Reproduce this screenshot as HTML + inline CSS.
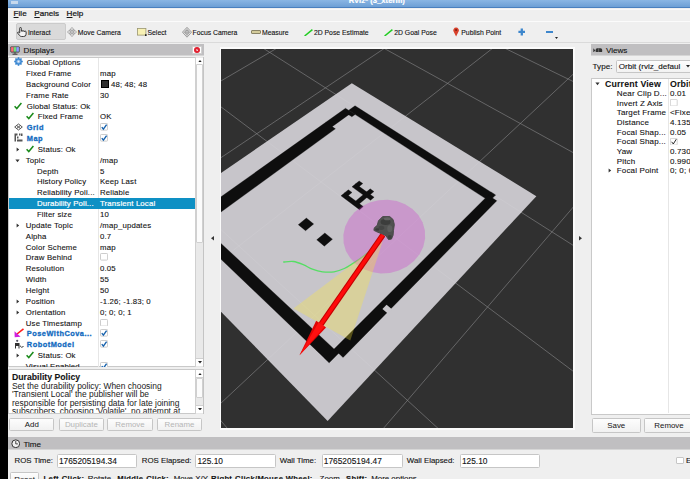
<!DOCTYPE html>
<html><head><meta charset="utf-8">
<style>
*{margin:0;padding:0;box-sizing:border-box}
html,body{width:690px;height:479px;overflow:hidden;background:#efefef;font-family:"Liberation Sans",sans-serif;color:#1e1e1e;position:relative}
.a{position:absolute}
.t{position:absolute;white-space:pre;line-height:1;color:#141414;-webkit-text-stroke:0.12px #141414}
.tb{font-size:6.85px;top:29.6px}
.dockh{background:#c0bfc1;height:12px;border-bottom:1px solid #d6d6d6}
.dockt{font-size:8.1px;top:3.4px}
.tree{background:#fff}
.lab{position:absolute;font-size:7.8px;letter-spacing:0.15px;white-space:pre;line-height:1;color:#111;-webkit-text-stroke:0.1px #111}
.b{font-weight:bold;color:#136bbf;-webkit-text-stroke:0.3px #136bbf;font-size:7.4px;letter-spacing:0.5px}
.btn{position:absolute;border:1px solid #c6c6c6;border-radius:1.5px;background:linear-gradient(#fdfdfd,#f1f1f1);font-size:7.9px;text-align:center;line-height:1;color:#141414}
.dis{color:#b5b5b5}
.field{position:absolute;border:1px solid #c6c6c6;border-radius:1.5px;background:#fff}
.sb{position:absolute;background:#fff;border:1px solid #cfcfcf}
</style></head><body>
<div class="a" style="left:0;top:0;width:8px;height:479px;background:#000"></div>
<!-- title bar -->
<div class="a" style="left:8px;top:0;width:682px;height:7.5px;background:linear-gradient(#8ab6e4,#6d9fd5);border-bottom:1px solid #4a80bf;overflow:hidden"><div class="t" style="left:340.7px;top:-3.3px;font-size:7.7px;font-weight:bold;color:#fff;-webkit-text-stroke:0.2px #fff">RViz* (3_xterm)</div></div>
<div class="a" style="left:11px;top:1px;width:6.5px;height:2.6px;background:#d8e4f0;opacity:0.8"></div>
<!-- menu -->
<div class="a" style="left:8px;top:8.5px;width:682px;height:12.5px;background:#efefef;border-top:1px solid #f9f9f9"></div>
<div class="t" style="left:13.6px;top:9.6px;font-size:8.1px;-webkit-text-stroke:0.22px #141414"><u>F</u>ile</div>
<div class="t" style="left:34.3px;top:9.6px;font-size:8.1px;-webkit-text-stroke:0.22px #141414"><u>P</u>anels</div>
<div class="t" style="left:66.6px;top:9.6px;font-size:8.1px;-webkit-text-stroke:0.22px #141414"><u>H</u>elp</div>
<!-- toolbar -->
<div class="a" style="left:8px;top:21px;width:682px;height:21.5px;background:#efefef;border-top:1px solid #fbfbfb;border-bottom:1px solid #dadada"></div>
<div class="a" style="left:15.7px;top:23.2px;width:50px;height:17.3px;background:#dadada;border:1px solid #cbcbcb;border-radius:2px"></div>
<svg class="a" style="left:17px;top:27px" width="10" height="10" viewBox="0 0 10 10"><path d="M2.7 5.6V1.3Q2.7 0.4 3.5 0.4Q4.3 0.4 4.3 1.3V4.3Q4.3 3.6 5.1 3.6Q5.9 3.6 5.9 4.4Q5.9 3.8 6.7 3.8Q7.5 3.8 7.5 4.6Q7.5 4.1 8.3 4.1Q9.1 4.1 9.1 5V7.2Q9.1 9.5 6.6 9.5H4.6Q3.3 9.5 2.4 8.3L0.7 6.1Q0.3 5.3 1.1 5.1Q1.9 5 2.7 6Z" stroke="#1a1a1a" stroke-width="0.85" fill="#f4f4f4"/></svg>
<div class="t tb" style="left:27.9px">Interact</div>
<svg class="a" style="left:67.3px;top:27px" width="10" height="10" viewBox="0 0 10 10"><path d="M5 0.4L6.9 2.6H5.8V4.2H7.4V3.1L9.6 5L7.4 6.9V5.8H5.8V7.4H6.9L5 9.6L3.1 7.4H4.2V5.8H2.6V6.9L0.4 5L2.6 3.1V4.2H4.2V2.6H3.1Z" stroke="#8c8c8c" stroke-width="0.7" fill="#f0f0f0"/><circle cx="5" cy="5" r="1.3" fill="none" stroke="#8c8c8c" stroke-width="0.55"/></svg>
<div class="t tb" style="left:77.8px">Move Camera</div>
<svg class="a" style="left:136.6px;top:27.8px" width="10" height="8" viewBox="0 0 10 8"><rect x="0.5" y="0.5" width="8.4" height="6.6" fill="#f8f1b4" stroke="#9a9670" stroke-width="0.8"/><rect x="8" y="6.3" width="1.6" height="1.6" fill="#111"/></svg>
<div class="t tb" style="left:147.5px">Select</div>
<svg class="a" style="left:181.7px;top:27px" width="10" height="10.5" viewBox="0 0 10 10.5"><path d="M5 0.3L9.6 5.2L5 10.2L0.4 5.2Z" stroke="#8a8a8a" stroke-width="0.8" fill="#e6e6e6"/><circle cx="5" cy="5.2" r="2" stroke="#8a8a8a" stroke-width="0.8" fill="none"/><path d="M5 1.5V9 M1.5 5.2H8.5" stroke="#8a8a8a" stroke-width="0.6"/></svg>
<div class="t tb" style="left:192.5px">Focus Camera</div>
<div class="a" style="left:251.4px;top:30px;width:9.4px;height:3.6px;background:#d4cc9c;border:0.8px solid #8a8466;border-radius:1px"></div>
<div class="t tb" style="left:262px">Measure</div>
<svg class="a" style="left:303.5px;top:28.5px" width="9" height="7.5" viewBox="0 0 9 7.5"><path d="M0.6 7L8.4 0.6" stroke="#22cc22" stroke-width="1.5"/></svg>
<div class="t tb" style="left:313.9px">2D Pose Estimate</div>
<svg class="a" style="left:383.6px;top:28.5px" width="9" height="7.5" viewBox="0 0 9 7.5"><path d="M0.6 7L8.4 0.6" stroke="#22cc22" stroke-width="1.5"/></svg>
<div class="t tb" style="left:394.2px">2D Goal Pose</div>
<svg class="a" style="left:452.6px;top:27.2px" width="6.2" height="9.8" viewBox="0 0 6.2 9.8"><path d="M3.1 9.6L0.6 4.6A2.8 2.8 0 1 1 5.6 4.6Z" fill="#d8402a"/><circle cx="3.1" cy="3" r="1" fill="#7a1a10"/></svg>
<div class="t tb" style="left:461.3px">Publish Point</div>
<svg class="a" style="left:517.6px;top:27.9px" width="7.6" height="7.8" viewBox="0 0 7.6 7.8"><path d="M3.8 0.4V7.4 M0.4 3.9H7.2" stroke="#3d86cc" stroke-width="2.3"/></svg>
<div class="a" style="left:545.5px;top:31px;width:7.7px;height:2.3px;background:#3d86cc"></div>
<svg class="a" style="left:555px;top:36.8px" width="3" height="2" viewBox="0 0 3 2"><path d="M0 0H3L1.5 2Z" fill="#222"/></svg>

<!-- Displays dock -->
<div class="a dockh" style="left:8px;top:44.2px;width:195.5px"></div>
<svg class="a" style="left:10.2px;top:46px" width="10" height="8.6" viewBox="0 0 10 8.6"><rect x="0.4" y="0.4" width="9.2" height="6" rx="0.8" fill="#333"/><rect x="1.1" y="1.1" width="2.6" height="4.6" fill="#ff6b7a"/><rect x="3.7" y="1.1" width="2.6" height="4.6" fill="#6ee07a"/><rect x="6.3" y="1.1" width="2.6" height="4.6" fill="#8fa0ff"/><path d="M5 6.4V7.8 M2.5 8.2H7.5" stroke="#222" stroke-width="0.9"/></svg>
<div class="t dockt" style="left:23.6px;top:47.1px">Displays</div>
<div class="a" style="left:192.4px;top:45.5px;width:9.7px;height:8.4px;background:#fff;border:0.6px solid #d0d0d0;border-radius:1px"></div>
<div class="a" style="left:194.4px;top:46.9px;width:5.8px;height:5.8px;border-radius:50%;background:#e02030"></div>
<svg class="a" style="left:196.1px;top:48.6px" width="2.4" height="2.4" viewBox="0 0 2.4 2.4"><path d="M0.3 0.3L2.1 2.1M2.1 0.3L0.3 2.1" stroke="#fff" stroke-width="0.7"/></svg>
<div class="a tree" style="left:8.2px;top:56.9px;width:195.6px;height:310.6px;border:1px solid #c9c9c9"></div>
<div class="a" style="left:98.2px;top:57.5px;width:0.7px;height:309.5px;background:#e6e6e6"></div>
<div class="a" style="left:0;top:57px;width:203px;height:310px;overflow:hidden"><div class="a" style="left:0;top:-57px;width:203px;height:400px"><!--TREE--><div class="lab" style="left:26.75px;top:59.10px;">Global Options</div><svg class="a" style="left:13.8px;top:56.50px" width="9" height="9" viewBox="0 0 9 9"><g fill="#3a86d0"><circle cx="4.5" cy="4.5" r="3.3"/><rect x="3.7" y="0.2" width="1.6" height="8.6"/><rect x="0.2" y="3.7" width="8.6" height="1.6"/><rect x="3.7" y="0.2" width="1.6" height="8.6" transform="rotate(45 4.5 4.5)"/><rect x="3.7" y="0.2" width="1.6" height="8.6" transform="rotate(-45 4.5 4.5)"/></g><circle cx="4.5" cy="4.5" r="2.1" fill="#7fb2e6"/><circle cx="4.5" cy="4.5" r="1.0" fill="#e8f1fb"/></svg><div class="lab" style="left:26.1px;top:69.95px;">Fixed Frame</div><div class="lab" style="left:100.0px;top:69.95px;">map</div><div class="lab" style="left:26.1px;top:80.80px;">Background Color</div><div class="a" style="left:101px;top:80.30px;width:7.7px;height:7.7px;background:#303030;border:1px solid #000"></div><div class="lab" style="left:111px;top:80.80px">48; 48; 48</div><div class="lab" style="left:26.1px;top:91.65px;">Frame Rate</div><div class="lab" style="left:100.0px;top:91.65px;">30</div><div class="lab" style="left:26.75px;top:102.50px;">Global Status: Ok</div><svg class="a" style="left:14.0px;top:101.50px" width="8" height="8" viewBox="0 0 8 8"><path d="M0.6 4.2 L2.8 6.6 L7.4 1.0" stroke="#1a8a1a" stroke-width="1.5" fill="none"/></svg><div class="lab" style="left:37.75px;top:113.35px;">Fixed Frame</div><svg class="a" style="left:25.5px;top:112.35px" width="8" height="8" viewBox="0 0 8 8"><path d="M0.6 4.2 L2.8 6.6 L7.4 1.0" stroke="#1a8a1a" stroke-width="1.5" fill="none"/></svg><div class="lab" style="left:100.0px;top:113.35px;">OK</div><div class="lab b" style="left:26.75px;top:124.20px;">Grid</div><svg class="a" style="left:14px;top:123.40px" width="9" height="8" viewBox="0 0 9 8"><path d="M4.5 1 L8.3 4 L4.5 7 L0.7 4 Z M2.6 2.5 L6.4 5.5 M6.4 2.5 L2.6 5.5" stroke="#555" stroke-width="1" fill="none"/></svg><svg class="a" style="left:99.7px;top:123.20px" width="8.1" height="7.6" viewBox="0 0 8.1 7.6"><rect x="0.5" y="0.5" width="7.1" height="6.6" rx="0.8" fill="#fff" stroke="#c6c6c6" stroke-width="0.9"/><path d="M1.8 4.1 L3.4 6.2 L6.6 1.7" stroke="#1762ad" stroke-width="1.4" fill="none"/></svg><div class="lab b" style="left:26.75px;top:135.05px;">Map</div><svg class="a" style="left:14px;top:133.45px" width="9" height="9" viewBox="0 0 9 9"><path d="M0.5 0.5h3v2h-1.5v6h-1.5z M5 0.5h1.5v2H5z M7 0.5h1.5v2.5H7z M3 6.5h5.5v2H3z M3 3.5h1.5v2H3z" fill="#555"/></svg><svg class="a" style="left:99.7px;top:134.05px" width="8.1" height="7.6" viewBox="0 0 8.1 7.6"><rect x="0.5" y="0.5" width="7.1" height="6.6" rx="0.8" fill="#fff" stroke="#c6c6c6" stroke-width="0.9"/><path d="M1.8 4.1 L3.4 6.2 L6.6 1.7" stroke="#1762ad" stroke-width="1.4" fill="none"/></svg><div class="lab" style="left:37.75px;top:145.90px;">Status: Ok</div><svg class="a" style="left:25.5px;top:144.90px" width="8" height="8" viewBox="0 0 8 8"><path d="M0.6 4.2 L2.8 6.6 L7.4 1.0" stroke="#1a8a1a" stroke-width="1.5" fill="none"/></svg><svg class="a" style="left:15.8px;top:147.00px" width="4" height="5" viewBox="0 0 4 5"><path d="M0.6 0.4 L3.2 2.5 L0.6 4.6Z" fill="#333"/></svg><div class="lab" style="left:25.8px;top:156.75px;">Topic</div><svg class="a" style="left:15.2px;top:158.65px" width="5" height="4" viewBox="0 0 5 4"><path d="M0.4 0.6 L4.6 0.6 L2.5 3.2Z" fill="#333"/></svg><div class="lab" style="left:100.0px;top:156.75px;">/map</div><div class="lab" style="left:36.9px;top:167.60px;">Depth</div><div class="lab" style="left:100.0px;top:167.60px;">5</div><div class="lab" style="left:36.9px;top:178.45px;">History Policy</div><div class="lab" style="left:100.0px;top:178.45px;">Keep Last</div><div class="lab" style="left:36.9px;top:189.30px;">Reliability Poli...</div><div class="lab" style="left:100.0px;top:189.30px;">Reliable</div><div class="a" style="left:8.7px;top:197.85px;width:186.3px;height:10.85px;background:#0e90c4"></div><div class="lab" style="left:36.9px;top:200.15px;color:#fff;-webkit-text-stroke:0.2px #fff;">Durability Poli...</div><div class="lab" style="left:100.0px;top:200.15px;color:#fff;-webkit-text-stroke:0.2px #fff;">Transient Local</div><div class="lab" style="left:36.9px;top:211.00px;">Filter size</div><div class="lab" style="left:100.0px;top:211.00px;">10</div><div class="lab" style="left:25.8px;top:221.85px;">Update Topic</div><svg class="a" style="left:15.8px;top:222.95px" width="4" height="5" viewBox="0 0 4 5"><path d="M0.6 0.4 L3.2 2.5 L0.6 4.6Z" fill="#333"/></svg><div class="lab" style="left:100.0px;top:221.85px;">/map_updates</div><div class="lab" style="left:25.8px;top:232.70px;">Alpha</div><div class="lab" style="left:100.0px;top:232.70px;">0.7</div><div class="lab" style="left:25.8px;top:243.55px;">Color Scheme</div><div class="lab" style="left:100.0px;top:243.55px;">map</div><div class="lab" style="left:25.8px;top:254.40px;">Draw Behind</div><svg class="a" style="left:99.7px;top:253.40px" width="8.1" height="7.6" viewBox="0 0 8.1 7.6"><rect x="0.5" y="0.5" width="7.1" height="6.6" rx="0.8" fill="#fff" stroke="#c6c6c6" stroke-width="0.9"/></svg><div class="lab" style="left:25.8px;top:265.25px;">Resolution</div><div class="lab" style="left:100.0px;top:265.25px;">0.05</div><div class="lab" style="left:25.8px;top:276.10px;">Width</div><div class="lab" style="left:100.0px;top:276.10px;">55</div><div class="lab" style="left:25.8px;top:286.95px;">Height</div><div class="lab" style="left:100.0px;top:286.95px;">50</div><div class="lab" style="left:25.8px;top:297.80px;">Position</div><svg class="a" style="left:15.8px;top:298.90px" width="4" height="5" viewBox="0 0 4 5"><path d="M0.6 0.4 L3.2 2.5 L0.6 4.6Z" fill="#333"/></svg><div class="lab" style="left:100.0px;top:297.80px;">-1.26; -1.83; 0</div><div class="lab" style="left:25.8px;top:308.65px;">Orientation</div><svg class="a" style="left:15.8px;top:309.75px" width="4" height="5" viewBox="0 0 4 5"><path d="M0.6 0.4 L3.2 2.5 L0.6 4.6Z" fill="#333"/></svg><div class="lab" style="left:100.0px;top:308.65px;">0; 0; 0; 1</div><div class="lab" style="left:25.8px;top:319.50px;">Use Timestamp</div><svg class="a" style="left:99.7px;top:318.50px" width="8.1" height="7.6" viewBox="0 0 8.1 7.6"><rect x="0.5" y="0.5" width="7.1" height="6.6" rx="0.8" fill="#fff" stroke="#c6c6c6" stroke-width="0.9"/></svg><div class="lab b" style="left:26.8px;top:330.35px;">PoseWithCova...</div><svg class="a" style="left:13.5px;top:328.05px" width="10" height="10" viewBox="0 0 10 10"><path d="M9.5 0.8 L3 6" stroke="#ff1a1a" stroke-width="1.6"/><path d="M0.5 3.2 L0.7 9.3 L6.6 8.8 Z" fill="#d020e0"/></svg><svg class="a" style="left:99.7px;top:329.35px" width="8.1" height="7.6" viewBox="0 0 8.1 7.6"><rect x="0.5" y="0.5" width="7.1" height="6.6" rx="0.8" fill="#fff" stroke="#c6c6c6" stroke-width="0.9"/><path d="M1.8 4.1 L3.4 6.2 L6.6 1.7" stroke="#1762ad" stroke-width="1.4" fill="none"/></svg><div class="lab b" style="left:26.8px;top:341.20px;">RobotModel</div><svg class="a" style="left:13.5px;top:338.90px" width="10" height="10" viewBox="0 0 10 10"><circle cx="3.2" cy="1.8" r="1.1" fill="#556"/><path d="M1 4h4.5v5.5h-1v-2.5h-2.5v2.5h-1z" fill="#333"/><path d="M5.8 6.5 Q7.5 9.5 9.5 7.5" stroke="#333" stroke-width="1" fill="none"/></svg><svg class="a" style="left:99.7px;top:340.20px" width="8.1" height="7.6" viewBox="0 0 8.1 7.6"><rect x="0.5" y="0.5" width="7.1" height="6.6" rx="0.8" fill="#fff" stroke="#c6c6c6" stroke-width="0.9"/><path d="M1.8 4.1 L3.4 6.2 L6.6 1.7" stroke="#1762ad" stroke-width="1.4" fill="none"/></svg><div class="lab" style="left:37.75px;top:352.05px;">Status: Ok</div><svg class="a" style="left:25.5px;top:351.05px" width="8" height="8" viewBox="0 0 8 8"><path d="M0.6 4.2 L2.8 6.6 L7.4 1.0" stroke="#1a8a1a" stroke-width="1.5" fill="none"/></svg><svg class="a" style="left:15.8px;top:353.15px" width="4" height="5" viewBox="0 0 4 5"><path d="M0.6 0.4 L3.2 2.5 L0.6 4.6Z" fill="#333"/></svg><div class="lab" style="left:25.8px;top:362.90px;">Visual Enabled</div><svg class="a" style="left:99.7px;top:361.90px" width="8.1" height="7.6" viewBox="0 0 8.1 7.6"><rect x="0.5" y="0.5" width="7.1" height="6.6" rx="0.8" fill="#fff" stroke="#c6c6c6" stroke-width="0.9"/><path d="M1.8 4.1 L3.4 6.2 L6.6 1.7" stroke="#1762ad" stroke-width="1.4" fill="none"/></svg><!--/TREE--></div></div>
<!-- tree scrollbar -->
<div class="a" style="left:195.2px;top:57.3px;width:8.8px;height:309.8px;background:#e9e9e9;border-left:1px solid #d0d0d0;border-right:1px solid #c4c4c4"></div>
<div class="a" style="left:195.9px;top:64.3px;width:7.4px;height:178.5px;background:#fbfbfb;border:0.7px solid #d0d0d0;border-radius:1px"></div>
<div class="a" style="left:195.9px;top:57.6px;width:7.4px;height:6.8px;background:#fff"></div>
<svg class="a" style="left:197.5px;top:59.6px" width="4" height="2.5" viewBox="0 0 4 2.5"><path d="M0 2.5H4L2 0Z" fill="#222"/></svg>
<div class="a" style="left:195.9px;top:358.2px;width:7.4px;height:8.3px;background:#fff;border-top:0.7px solid #d0d0d0"></div>
<svg class="a" style="left:197.5px;top:361px" width="4" height="2.5" viewBox="0 0 4 2.5"><path d="M0 0H4L2 2.5Z" fill="#222"/></svg>
<!-- description -->
<div class="a tree" style="left:8.2px;top:369.2px;width:195.6px;height:44.6px;border:1px solid #c9c9c9;overflow:hidden">
 <div class="t" style="left:2.8px;top:2.7px;font-size:8.7px;font-weight:bold;-webkit-text-stroke:0.1px #141414">Durability Policy</div>
 <div class="t" style="left:2.8px;top:11.6px;font-size:8.45px;line-height:8.4px;-webkit-text-stroke:0;color:#222">Set the durability policy: When choosing
'Transient Local' the publisher will be
responsible for persisting data for late joining
subscribers, choosing 'Volatile', no attempt at</div>
</div>
<div class="a" style="left:195.2px;top:370px;width:8.8px;height:43.6px;background:#e9e9e9;border-left:1px solid #d0d0d0;border-right:1px solid #c4c4c4"></div>
<div class="a" style="left:195.9px;top:370.3px;width:7.4px;height:7.6px;background:#fff;border-bottom:0.7px solid #d0d0d0"></div>
<svg class="a" style="left:197.5px;top:372.8px" width="4" height="2.5" viewBox="0 0 4 2.5"><path d="M0 2.5H4L2 0Z" fill="#222"/></svg>
<div class="a" style="left:195.9px;top:377.9px;width:7.4px;height:20px;background:#fbfbfb;border:0.7px solid #d0d0d0;border-radius:1px"></div>
<div class="a" style="left:195.9px;top:404.8px;width:7.4px;height:8.3px;background:#fff;border-top:0.7px solid #d0d0d0"></div>
<svg class="a" style="left:197.5px;top:407.6px" width="4" height="2.5" viewBox="0 0 4 2.5"><path d="M0 0H4L2 2.5Z" fill="#222"/></svg>
<!-- buttons -->
<div class="btn" style="left:9.3px;top:417.5px;width:45.2px;height:13.8px;padding-top:2.3px">Add</div>
<div class="btn dis" style="left:58.7px;top:417.5px;width:45.3px;height:13.8px;padding-top:2.3px">Duplicate</div>
<div class="btn dis" style="left:107.3px;top:417.5px;width:45.4px;height:13.8px;padding-top:2.3px">Remove</div>
<div class="btn dis" style="left:156.7px;top:417.5px;width:45.6px;height:13.8px;padding-top:2.3px">Rename</div>
<!-- splitter arrows -->
<svg class="a" style="left:210.5px;top:236.3px" width="3" height="4.6" viewBox="0 0 3 4.6"><path d="M3 0V4.6L0 2.3Z" fill="#333"/></svg>
<svg class="a" style="left:579.3px;top:236.3px" width="3" height="4.6" viewBox="0 0 3 4.6"><path d="M0 0V4.6L3 2.3Z" fill="#333"/></svg>

<!-- 3D view -->
<div class="a" style="left:220.2px;top:47.4px;width:354.4px;height:382.4px;background:#fbfbfb"></div>
<div class="a" style="left:221.3px;top:48.7px;width:352px;height:379.8px;background:#303030;overflow:hidden" id="v3d"><!--SCENE--><svg width="352" height="380" style="position:absolute;left:0;top:0"><path d="M-643.49,226.82L194.31,6244.77M-496.66,157.83L551.81,2942.24M-374.95,100.65L674.54,1808.55M-272.43,52.49L736.59,1235.34M-184.90,11.37L774.04,889.35M-109.28,-24.16L799.10,657.82M-43.31,-55.15L817.05,492.02M14.76,-82.43L830.54,367.43M66.26,-106.63L841.04,270.39M112.24,-128.23L849.46,192.67M153.56,-147.64L856.35,129.03M-566.47,190.63L153.56,-147.64M-548.98,258.47L197.08,-130.51M-527.69,341.07L245.03,-111.63M-501.20,443.81L298.12,-90.73M-467.35,575.09L357.23,-67.46M-422.59,748.73L423.44,-41.39M-360.60,989.16L498.12,-12.00M-269.10,1344.11L583.00,21.42M-120.38,1920.95L680.32,59.73M163.58,3022.39L793.03,104.10" stroke="#8a8a8c" stroke-width="0.8" fill="none" opacity="0.75"/><polygon points="130.82,34.27 -81.11,179.49 106.63,372.06 315.37,147.14" fill="rgb(211,209,214)" fill-opacity="0.93"/><path d="M134.03,56.78L127.67,61.34L268.43,152.11L274.50,145.98ZM270.23,143.27L267.20,146.29L271.48,149.03L274.50,145.98ZM267.20,146.29L113.08,300.00L122.09,308.41L275.79,151.79ZM113.08,300.00L103.70,309.36L108.18,313.64L117.56,304.19ZM-18.87,176.76L-28.08,183.46L108.18,313.64L117.56,304.19ZM124.49,59.29L104.77,73.31L111.15,77.63L130.87,63.40ZM130.87,63.40L127.65,65.72L130.87,67.82L134.09,65.48ZM104.77,73.31L-37.50,174.47L-28.08,183.46L114.39,79.82ZM85.39,169.10L77.28,175.66L84.56,181.66L92.68,174.98ZM103.84,184.00L95.73,190.86L103.35,197.13L111.46,190.15ZM123.67,143.76L119.97,146.78L138.54,160.71L142.24,157.55ZM127.35,140.76L123.67,143.76L127.33,146.47L131.00,143.45ZM134.60,134.85L130.99,137.79L149.54,151.33L153.14,148.26ZM138.17,131.93L134.60,134.85L138.24,137.49L141.82,134.55ZM149.20,139.84L134.72,151.97L138.47,154.75L152.93,142.52Z" fill="#0e0e0e" stroke="#0e0e0e" stroke-width="0.3"/><polygon points="165.55,255.82 161.42,259.98 166.82,264.51 170.94,260.30" fill="rgb(200,198,202)"/><path d="M62.70,213.00C64.33,212.92 69.17,212.02 72.50,212.50C75.83,212.98 79.55,214.62 82.70,215.90C85.85,217.18 88.27,219.05 91.40,220.20C94.53,221.35 97.88,222.37 101.50,222.80C105.12,223.23 109.47,223.35 113.10,222.80C116.73,222.25 120.15,220.90 123.30,219.50C126.45,218.10 129.10,216.22 132.00,214.40C134.90,212.58 137.58,210.95 140.70,208.60C143.82,206.25 147.70,203.18 150.70,200.30C153.70,197.42 157.37,192.80 158.70,191.30" stroke="rgb(85,222,100)" stroke-width="1.3" fill="none" stroke-linecap="round"/><polygon points="122.64,193.95 122.40,185.70 124.20,177.54 127.95,169.89 133.48,163.13 140.50,157.59 148.66,153.56 157.56,151.23 166.73,150.73 175.74,152.07 184.12,155.20 191.45,159.95 197.36,166.09 201.57,173.30 203.86,181.23 204.10,189.48 202.30,197.64 198.55,205.29 193.02,212.05 186.00,217.59 177.84,221.62 168.94,223.95 159.77,224.45 150.76,223.11 142.38,219.98 135.05,215.23 129.14,209.09 124.93,201.88" fill="rgb(204,51,204)" fill-opacity="0.3"/><polygon points="161.70,192.30 72.50,259.50 129.30,291.60" fill="rgb(255,235,50)" fill-opacity="0.3"/><polygon points="102.40,276.65 164.28,187.41 159.68,184.22 97.80,273.46" fill="#c40000"/><polygon points="101.52,276.04 163.41,186.80 160.55,184.82 98.67,274.07" fill="#ff0a0a"/><polygon points="105.03,278.47 78.50,306.20 95.17,271.64" fill="#e00404"/><polygon points="103.79,277.62 78.50,306.20 97.63,273.35" fill="#ff1010"/><polygon points="157.48,171.75 161.65,167.57 168.75,167.57 172.09,170.50 173.35,175.51 172.51,181.35 172.09,186.36 170.42,190.12 167.50,190.54 164.99,186.78 161.65,185.11 156.23,183.02 152.89,181.35 153.30,178.85 156.23,176.34" fill="#505150" stroke="#454645" stroke-width="0.9" stroke-linejoin="round"/><ellipse cx="164.58" cy="173.00" rx="5.01" ry="2.92" fill="#3c3d3c"/><ellipse cx="168.75" cy="179.68" rx="2.51" ry="3.34" fill="#5e5f5e"/><ellipse cx="160.40" cy="178.85" rx="2.92" ry="2.09" fill="#444544"/><ellipse cx="156.23" cy="180.52" rx="2.09" ry="1.25" fill="#3a3b3a"/><ellipse cx="168.75" cy="188.03" rx="2.09" ry="2.09" fill="#3e3f3e"/><ellipse cx="166.25" cy="169.66" rx="3.34" ry="1.50" fill="#626362"/></svg><!--/SCENE--></div>

<!-- Views dock -->
<div class="a dockh" style="left:591.2px;top:43.9px;width:99px"></div>
<svg class="a" style="left:593.2px;top:47.6px" width="9.4" height="4.8" viewBox="0 0 9.4 4.8"><path d="M0.3 0.3L2.3 2.4L0.3 4.5Z" fill="#333"/><rect x="2.6" y="0.3" width="6.6" height="4.2" rx="1.6" fill="#333"/><path d="M5.6 0.5V4.3" stroke="#999" stroke-width="0.5"/></svg>
<div class="t dockt" style="left:605.9px;top:47px">Views</div>
<div class="t" style="left:592.6px;top:63.2px;font-size:8.1px">Type:</div>
<div class="a" style="left:616.2px;top:59.6px;width:80px;height:13.7px;background:linear-gradient(#fdfdfd,#f2f2f2);border:1px solid #c6c6c6;border-radius:1.5px"></div>
<div class="t" style="left:618.8px;top:63.2px;font-size:8.1px">Orbit (rviz_defaul</div>
<svg class="a" style="left:686.3px;top:65.2px" width="4" height="2.5" viewBox="0 0 4 2.5"><path d="M0 0H4L2 2.5Z" fill="#222"/></svg>
<div class="a tree" style="left:591.2px;top:78.4px;width:100px;height:336.4px;border:1px solid #c9c9c9"></div>
<div class="a" style="left:667.7px;top:79px;width:0.7px;height:334px;background:#e6e6e6"></div>
<!--VIEWS--><div class="lab" style="left:605px;top:79.55px;font-weight:bold;font-size:8.8px;-webkit-text-stroke:0.05px #141414;">Current View</div><svg class="a" style="left:595.2px;top:81.70px" width="5" height="4" viewBox="0 0 5 4"><path d="M0.4 0.6 L4.6 0.6 L2.5 3.2Z" fill="#333"/></svg><div class="lab" style="left:670px;top:79.55px;font-weight:bold;font-size:8.8px;-webkit-text-stroke:0.05px #141414;">Orbit</div><div class="lab" style="left:616.8px;top:89.85px;font-size:8px;">Near Clip D...</div><div class="lab" style="left:670px;top:89.85px;font-size:8px;">0.01</div><div class="lab" style="left:616.8px;top:99.55px;font-size:8px;">Invert Z Axis</div><svg class="a" style="left:670.3px;top:99.10px" width="7.6" height="7.4" viewBox="0 0 7.6 7.4"><rect x="0.4" y="0.4" width="6.8" height="6.6" rx="0.6" fill="#fff" stroke="#c9c9c9" stroke-width="0.8"/></svg><div class="lab" style="left:616.8px;top:109.25px;font-size:8px;">Target Frame</div><div class="lab" style="left:670px;top:109.25px;font-size:8px;">&lt;Fixed Frame&gt;</div><div class="lab" style="left:616.8px;top:118.95px;font-size:8px;">Distance</div><div class="lab" style="left:670px;top:118.95px;font-size:8px;">4.135</div><div class="lab" style="left:616.8px;top:128.65px;font-size:8px;">Focal Shap...</div><div class="lab" style="left:670px;top:128.65px;font-size:8px;">0.05</div><div class="lab" style="left:616.8px;top:138.35px;font-size:8px;">Focal Shap...</div><svg class="a" style="left:670.3px;top:137.90px" width="7.6" height="7.4" viewBox="0 0 7.6 7.4"><rect x="0.4" y="0.4" width="6.8" height="6.6" rx="0.6" fill="#fff" stroke="#c9c9c9" stroke-width="0.8"/><path d="M1.6 3.8 L3.3 6.0 L6.3 1.2" stroke="#111" stroke-width="0.9" fill="none"/></svg><div class="lab" style="left:616.8px;top:148.05px;font-size:8px;">Yaw</div><div class="lab" style="left:670px;top:148.05px;font-size:8px;">0.730</div><div class="lab" style="left:616.8px;top:157.75px;font-size:8px;">Pitch</div><div class="lab" style="left:670px;top:157.75px;font-size:8px;">0.990</div><div class="lab" style="left:616.8px;top:167.45px;font-size:8px;">Focal Point</div><svg class="a" style="left:607.8px;top:168.40px" width="4" height="5" viewBox="0 0 4 5"><path d="M0.6 0.4 L3.2 2.5 L0.6 4.6Z" fill="#333"/></svg><div class="lab" style="left:670px;top:167.45px;font-size:8px;">0; 0; 0</div><!--/VIEWS-->
<div class="btn" style="left:592px;top:418px;width:48.5px;height:14.6px;padding-top:3.4px">Save</div>
<div class="btn" style="left:644px;top:418px;width:50px;height:14.6px;padding-top:3.4px">Remove</div>

<!-- Time dock -->
<div class="a dockh" style="left:8px;top:437.3px;width:682px;height:12.8px"></div>
<svg class="a" style="left:10.8px;top:438.8px" width="9.5" height="9.5" viewBox="0 0 9.5 9.5"><circle cx="4.75" cy="4.75" r="3.9" fill="#f2f2f2" stroke="#333" stroke-width="1"/><path d="M4.75 2V4.9H6.9" stroke="#333" stroke-width="0.9" fill="none"/></svg>
<div class="t dockt" style="left:23.4px;top:441px">Time</div>
<div class="t" style="left:14.6px;top:457.2px;font-size:7.85px">ROS Time:</div>
<div class="field" style="left:56.7px;top:453.7px;width:80.7px;height:13.9px"></div>
<div class="t" style="left:58.9px;top:456.9px;font-size:8.35px">1765205194.34</div>
<div class="t" style="left:141.8px;top:457.2px;font-size:7.85px">ROS Elapsed:</div>
<div class="field" style="left:195.2px;top:453.7px;width:80.5px;height:13.9px"></div>
<div class="t" style="left:197.4px;top:456.9px;font-size:8.35px">125.10</div>
<div class="t" style="left:279.8px;top:457.2px;font-size:7.85px">Wall Time:</div>
<div class="field" style="left:321.6px;top:453.7px;width:81px;height:13.9px"></div>
<div class="t" style="left:323.8px;top:456.9px;font-size:8.35px">1765205194.47</div>
<div class="t" style="left:406.8px;top:457.2px;font-size:7.85px">Wall Elapsed:</div>
<div class="field" style="left:459.7px;top:453.7px;width:80.7px;height:13.9px"></div>
<div class="t" style="left:461.9px;top:456.9px;font-size:8.35px">125.10</div>
<div class="a" style="left:676px;top:456.6px;width:7.6px;height:7.6px;background:#fff;border:0.8px solid #c6c6c6;border-radius:1px"></div>
<div class="t" style="left:686px;top:457.2px;font-size:7.85px">E</div>
<!-- status bar -->
<div class="btn" style="left:9.7px;top:472px;width:29.7px;height:12px;padding-top:2.8px">Reset</div>
<div class="t" style="left:43.6px;top:474.6px;font-size:7.7px;font-weight:bold;letter-spacing:0.3px">Left-Click:</div><div class="t" style="left:87.8px;top:474.6px;font-size:7.9px">Rotate.</div><div class="t" style="left:117.2px;top:474.6px;font-size:7.7px;font-weight:bold;letter-spacing:0.3px">Middle-Click:</div><div class="t" style="left:173.7px;top:474.6px;font-size:7.9px">Move X/Y.</div><div class="t" style="left:211.1px;top:474.6px;font-size:7.7px;font-weight:bold;letter-spacing:0.3px">Right-Click/Mouse Wheel:</div><div class="t" style="left:319.6px;top:474.6px;font-size:7.9px">Zoom.</div><div class="t" style="left:346px;top:474.6px;font-size:7.7px;font-weight:bold;letter-spacing:0.3px">Shift:</div><div class="t" style="left:371.2px;top:474.6px;font-size:7.9px">More options.</div>
</body></html>
